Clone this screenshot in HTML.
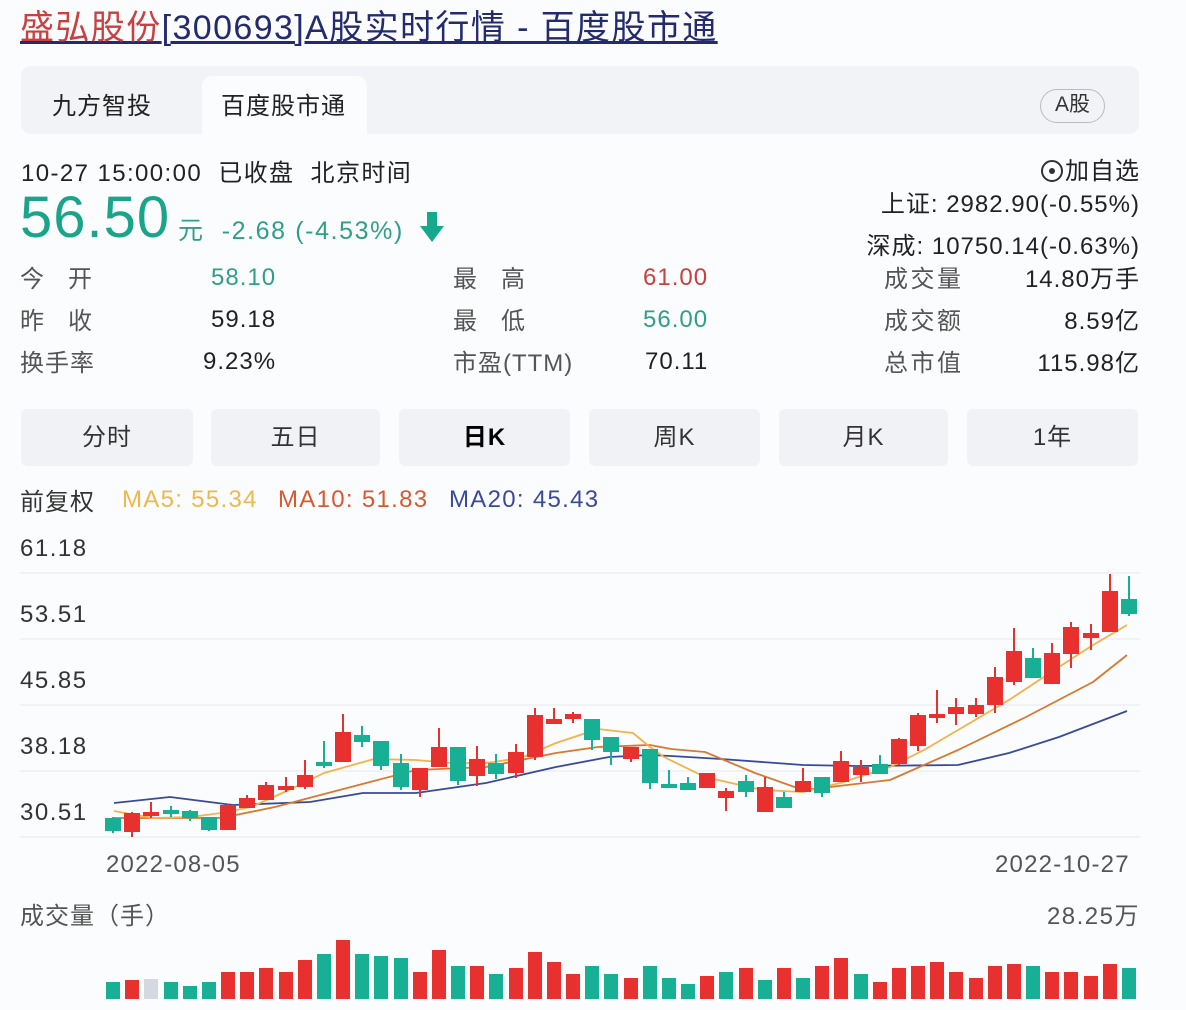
<!DOCTYPE html>
<html><head><meta charset="utf-8"><style>
*{margin:0;padding:0;box-sizing:border-box}
body{width:1186px;height:1010px;background:#fbfcfe;font-family:"Liberation Sans","Noto Sans CJK SC",sans-serif;color:#222;position:relative;overflow:hidden;letter-spacing:1px}
.a{position:absolute;white-space:nowrap}
.btn{position:absolute;top:409px;height:57px;background:#f1f2f5;border-radius:6px;font-size:24px;color:#333;text-align:center;line-height:57px}
.lbl{color:#555;font-size:24px;margin-top:-5px}
.v{font-size:24px;color:#222}
.vc{margin-top:-5px}
</style></head><body>
<div class="a" style="left:20px;top:6px;font-size:34px;line-height:44px;text-decoration:underline;color:#232a6e;letter-spacing:1.4px"><span style="color:#c8403f">盛弘股份</span>[300693]A股实时行情 - 百度股市通</div>

<div class="a" style="left:21px;top:66px;width:1118px;height:68px;background:#f2f3f6;border-radius:10px"></div>
<div class="a" style="left:202px;top:76px;width:165px;height:58px;background:#fbfcfe;border-radius:10px 10px 0 0"></div>
<div class="a" style="left:52px;top:86px;font-size:24px;color:#222">九方智投</div>
<div class="a" style="left:221px;top:86px;font-size:24px;color:#222">百度股市通</div>
<div class="a" style="left:1040px;top:89px;width:65px;height:34px;border:1px solid #bbb;border-radius:17px;font-size:21px;line-height:30px;text-align:center;color:#333;letter-spacing:0">A股</div>

<div class="a" style="left:21px;top:153px;font-size:24px;color:#222;letter-spacing:1.4px">10-27 15:00:00&nbsp; 已收盘&nbsp; 北京时间</div>
<div class="a" style="left:20px;top:185px;font-size:58px;line-height:66px;color:#1aa58b;letter-spacing:1px">56.50</div>
<div class="a" style="left:178px;top:211px;font-size:25px;color:#2f9e8a;letter-spacing:1.6px">元 &nbsp;-2.68 (-4.53%)</div>
<svg class="a" style="left:418px;top:210px" width="28" height="34"><path d="M9 2h10v14h7L14 32 2 16h7z" fill="#17a98b"/></svg>

<div class="a" style="right:46px;top:151px;font-size:24px;color:#222"><span style="display:inline-block;width:22px;height:22px;border:2px solid #333;border-radius:50%;vertical-align:-3px;position:relative;margin-right:2px"><span style="position:absolute;left:6px;top:6px;width:6px;height:6px;background:#333;border-radius:50%"></span></span>加自选</div>
<div class="a" style="right:46px;top:184px;font-size:24px;color:#222">上证: 2982.90(-0.55%)</div>
<div class="a" style="right:46px;top:226px;font-size:24px;color:#222">深成: 10750.14(-0.63%)</div>

<div class="a lbl" style="left:20px;top:264px">今&nbsp;&nbsp;&nbsp;开</div>
<div class="a v" style="left:211px;top:264px;color:#2f9e8a">58.10</div>
<div class="a lbl" style="left:20px;top:306px">昨&nbsp;&nbsp;&nbsp;收</div>
<div class="a v" style="left:211px;top:306px">59.18</div>
<div class="a lbl" style="left:20px;top:348px">换手率</div>
<div class="a v" style="left:203px;top:348px">9.23%</div>

<div class="a lbl" style="left:453px;top:264px">最&nbsp;&nbsp;&nbsp;高</div>
<div class="a v" style="left:643px;top:264px;color:#c8403f">61.00</div>
<div class="a lbl" style="left:453px;top:306px">最&nbsp;&nbsp;&nbsp;低</div>
<div class="a v" style="left:643px;top:306px;color:#2f9e8a">56.00</div>
<div class="a lbl" style="left:453px;top:348px">市盈(TTM)</div>
<div class="a v" style="left:645px;top:348px">70.11</div>

<div class="a lbl" style="left:884px;top:264px;letter-spacing:2.5px">成交量</div>
<div class="a v vc" style="right:46px;top:264px">14.80万手</div>
<div class="a lbl" style="left:884px;top:306px;letter-spacing:2.5px">成交额</div>
<div class="a v vc" style="right:46px;top:306px">8.59亿</div>
<div class="a lbl" style="left:884px;top:348px;letter-spacing:2.5px">总市值</div>
<div class="a v vc" style="right:46px;top:348px">115.98亿</div>

<div class="btn" style="left:21px;width:172px">分时</div>
<div class="btn" style="left:211px;width:169px">五日</div>
<div class="btn" style="left:399px;width:171px;color:#000;font-weight:bold">日K</div>
<div class="btn" style="left:589px;width:171px">周K</div>
<div class="btn" style="left:779px;width:169px">月K</div>
<div class="btn" style="left:967px;width:171px">1年</div>

<div class="a" style="left:20px;top:482px;font-size:24px;color:#333">前复权</div>
<div class="a" style="left:122px;top:486px;font-size:24px;color:#f0b74a;letter-spacing:1.3px">MA5: 55.34</div>
<div class="a" style="left:278px;top:486px;font-size:24px;color:#d9582f;letter-spacing:1.3px">MA10: 51.83</div>
<div class="a" style="left:449px;top:486px;font-size:24px;color:#3a4a9a;letter-spacing:1.3px">MA20: 45.43</div>

<div class="a" style="left:20px;top:535px;font-size:24px;color:#333;letter-spacing:1.5px">61.18</div>
<div class="a" style="left:20px;top:601px;font-size:24px;color:#333;letter-spacing:1.5px">53.51</div>
<div class="a" style="left:20px;top:667px;font-size:24px;color:#333;letter-spacing:1.5px">45.85</div>
<div class="a" style="left:20px;top:733px;font-size:24px;color:#333;letter-spacing:1.5px">38.18</div>
<div class="a" style="left:20px;top:799px;font-size:24px;color:#333;letter-spacing:1.5px">30.51</div>
<div class="a" style="left:106px;top:851px;font-size:24px;color:#555;letter-spacing:1.2px">2022-08-05</div>
<div class="a" style="left:995px;top:851px;font-size:24px;color:#555;letter-spacing:1.2px">2022-10-27</div>
<div class="a" style="left:20px;top:896px;font-size:24px;color:#555">成交量（手）</div>
<div class="a" style="right:46px;top:896px;font-size:24px;color:#555;letter-spacing:1.5px">28.25万</div>

<svg class="a" style="left:0;top:0" width="1186" height="1010">
<g stroke="#eceef3" stroke-width="1.5">
<line x1="20" y1="573" x2="1140" y2="573"/><line x1="20" y1="639" x2="1140" y2="639"/><line x1="20" y1="705" x2="1140" y2="705"/><line x1="20" y1="771" x2="1140" y2="771"/><line x1="20" y1="837" x2="1140" y2="837"/>
</g>
<g fill="none" stroke-width="1.8" stroke-linejoin="round">
<polyline stroke="#3a4a9a" points="114,803 170,797 233,805 310,802 363,793 416,793 486,783 556,767 609,757 650,755 671,756 721,759 803,765 857,766 958,765 1009,753 1059,737 1127,711"/>
<polyline stroke="#d9782f" points="114,818 221,818 275,807 328,793 370,782 416,770 486,767 556,753 598,747 650,745 671,749 705,752 755,773 803,790 830,787 890,780 958,750 1026,717 1093,682 1127,655"/>
<polyline stroke="#f3b24a" points="114,811 153,818 191,817 221,813 251,807 289,790 324,773 374,759 416,760 451,763 486,763 521,758 556,743 598,729 633,733 650,747 664,757 705,777 762,790 803,792 840,783 890,767 924,750 975,720 1009,700 1059,667 1093,645 1127,625"/>
</g>
<g stroke-width="2">
<g stroke="#17b095" fill="#17b095">
<line x1="113" y1="817" x2="113" y2="833"/><rect x="106" y="819" width="14" height="11"/>
<line x1="171" y1="806" x2="171" y2="817"/><rect x="164" y="811" width="14" height="2"/>
<line x1="190" y1="810" x2="190" y2="821"/><rect x="183" y="812" width="14" height="5"/>
<line x1="209" y1="818" x2="209" y2="831"/><rect x="202" y="818" width="14" height="11"/>
<line x1="324" y1="741" x2="324" y2="768"/><rect x="317" y="763" width="14" height="2"/>
<line x1="362" y1="726" x2="362" y2="747"/><rect x="355" y="736" width="14" height="5"/>
<line x1="381" y1="742" x2="381" y2="770"/><rect x="374" y="742" width="14" height="23"/>
<line x1="401" y1="754" x2="401" y2="790"/><rect x="394" y="764" width="14" height="22"/>
<line x1="458" y1="748" x2="458" y2="785"/><rect x="451" y="748" width="14" height="32"/>
<line x1="496" y1="754" x2="496" y2="779"/><rect x="489" y="764" width="14" height="9"/>
<line x1="592" y1="720" x2="592" y2="750"/><rect x="585" y="720" width="14" height="19"/>
<line x1="611" y1="738" x2="611" y2="765"/><rect x="604" y="738" width="14" height="13"/>
<line x1="650" y1="750" x2="650" y2="789"/><rect x="643" y="750" width="14" height="32"/>
<line x1="669" y1="770" x2="669" y2="787"/><rect x="662" y="785" width="14" height="2"/>
<line x1="688" y1="777" x2="688" y2="789"/><rect x="681" y="784" width="14" height="5"/>
<line x1="746" y1="775" x2="746" y2="797"/><rect x="739" y="782" width="14" height="9"/>
<line x1="784" y1="792" x2="784" y2="807"/><rect x="777" y="798" width="14" height="9"/>
<line x1="822" y1="778" x2="822" y2="797"/><rect x="815" y="778" width="14" height="14"/>
<line x1="880" y1="755" x2="880" y2="773"/><rect x="873" y="765" width="14" height="8"/>
<line x1="1033" y1="648" x2="1033" y2="678"/><rect x="1026" y="659" width="14" height="18"/>
<line x1="1129" y1="576" x2="1129" y2="616"/><rect x="1122" y="600" width="14" height="13"/>
</g>
<g stroke="#e8312f" fill="#e8312f">
<line x1="132" y1="812" x2="132" y2="837"/><rect x="125" y="814" width="14" height="17"/>
<line x1="151" y1="802" x2="151" y2="818"/><rect x="144" y="813" width="14" height="2"/>
<line x1="228" y1="804" x2="228" y2="830"/><rect x="221" y="806" width="14" height="23"/>
<line x1="247" y1="795" x2="247" y2="808"/><rect x="240" y="799" width="14" height="8"/>
<line x1="266" y1="782" x2="266" y2="800"/><rect x="259" y="786" width="14" height="13"/>
<line x1="286" y1="777" x2="286" y2="792"/><rect x="279" y="787" width="14" height="2"/>
<line x1="305" y1="760" x2="305" y2="789"/><rect x="298" y="776" width="14" height="10"/>
<line x1="343" y1="714" x2="343" y2="761"/><rect x="336" y="733" width="14" height="28"/>
<line x1="420" y1="769" x2="420" y2="797"/><rect x="413" y="769" width="14" height="20"/>
<line x1="439" y1="728" x2="439" y2="766"/><rect x="432" y="748" width="14" height="18"/>
<line x1="477" y1="746" x2="477" y2="786"/><rect x="470" y="760" width="14" height="15"/>
<line x1="516" y1="744" x2="516" y2="778"/><rect x="509" y="753" width="14" height="19"/>
<line x1="535" y1="708" x2="535" y2="760"/><rect x="528" y="716" width="14" height="40"/>
<line x1="554" y1="708" x2="554" y2="723"/><rect x="547" y="720" width="14" height="3"/>
<line x1="573" y1="712" x2="573" y2="723"/><rect x="566" y="715" width="14" height="3"/>
<line x1="631" y1="748" x2="631" y2="762"/><rect x="624" y="748" width="14" height="10"/>
<line x1="707" y1="773" x2="707" y2="787"/><rect x="700" y="774" width="14" height="13"/>
<line x1="726" y1="788" x2="726" y2="811"/><rect x="719" y="792" width="14" height="5"/>
<line x1="765" y1="777" x2="765" y2="811"/><rect x="758" y="788" width="14" height="23"/>
<line x1="803" y1="768" x2="803" y2="791"/><rect x="796" y="782" width="14" height="9"/>
<line x1="841" y1="751" x2="841" y2="781"/><rect x="834" y="762" width="14" height="19"/>
<line x1="861" y1="760" x2="861" y2="782"/><rect x="854" y="768" width="14" height="6"/>
<line x1="899" y1="738" x2="899" y2="765"/><rect x="892" y="740" width="14" height="23"/>
<line x1="918" y1="713" x2="918" y2="751"/><rect x="911" y="716" width="14" height="29"/>
<line x1="937" y1="690" x2="937" y2="723"/><rect x="930" y="715" width="14" height="2"/>
<line x1="956" y1="698" x2="956" y2="725"/><rect x="949" y="708" width="14" height="5"/>
<line x1="976" y1="698" x2="976" y2="717"/><rect x="969" y="706" width="14" height="7"/>
<line x1="995" y1="667" x2="995" y2="713"/><rect x="988" y="678" width="14" height="26"/>
<line x1="1014" y1="628" x2="1014" y2="685"/><rect x="1007" y="652" width="14" height="29"/>
<line x1="1052" y1="643" x2="1052" y2="683"/><rect x="1045" y="654" width="14" height="29"/>
<line x1="1071" y1="622" x2="1071" y2="668"/><rect x="1064" y="628" width="14" height="25"/>
<line x1="1091" y1="624" x2="1091" y2="650"/><rect x="1084" y="634" width="14" height="3"/>
<line x1="1110" y1="574" x2="1110" y2="631"/><rect x="1103" y="592" width="14" height="39"/>
</g>
</g>
<g>
<rect x="106" y="982" width="14" height="17" fill="#17b095"/>
<rect x="125" y="980" width="14" height="19" fill="#e8312f"/>
<rect x="144" y="979" width="14" height="20" fill="#d4d8e0"/>
<rect x="164" y="982" width="14" height="17" fill="#17b095"/>
<rect x="183" y="986" width="14" height="13" fill="#17b095"/>
<rect x="202" y="982" width="14" height="17" fill="#17b095"/>
<rect x="221" y="972" width="14" height="27" fill="#e8312f"/>
<rect x="240" y="972" width="14" height="27" fill="#e8312f"/>
<rect x="259" y="968" width="14" height="31" fill="#e8312f"/>
<rect x="279" y="972" width="14" height="27" fill="#e8312f"/>
<rect x="298" y="960" width="14" height="39" fill="#e8312f"/>
<rect x="317" y="954" width="14" height="45" fill="#17b095"/>
<rect x="336" y="940" width="14" height="59" fill="#e8312f"/>
<rect x="355" y="954" width="14" height="45" fill="#17b095"/>
<rect x="374" y="956" width="14" height="43" fill="#17b095"/>
<rect x="394" y="958" width="14" height="41" fill="#17b095"/>
<rect x="413" y="972" width="14" height="27" fill="#e8312f"/>
<rect x="432" y="950" width="14" height="49" fill="#e8312f"/>
<rect x="451" y="966" width="14" height="33" fill="#17b095"/>
<rect x="470" y="966" width="14" height="33" fill="#e8312f"/>
<rect x="489" y="974" width="14" height="25" fill="#17b095"/>
<rect x="509" y="968" width="14" height="31" fill="#e8312f"/>
<rect x="528" y="952" width="14" height="47" fill="#e8312f"/>
<rect x="547" y="962" width="14" height="37" fill="#e8312f"/>
<rect x="566" y="974" width="14" height="25" fill="#e8312f"/>
<rect x="585" y="966" width="14" height="33" fill="#17b095"/>
<rect x="604" y="974" width="14" height="25" fill="#17b095"/>
<rect x="624" y="978" width="14" height="21" fill="#e8312f"/>
<rect x="643" y="966" width="14" height="33" fill="#17b095"/>
<rect x="662" y="978" width="14" height="21" fill="#17b095"/>
<rect x="681" y="984" width="14" height="15" fill="#17b095"/>
<rect x="700" y="976" width="14" height="23" fill="#e8312f"/>
<rect x="719" y="972" width="14" height="27" fill="#17b095"/>
<rect x="739" y="968" width="14" height="31" fill="#e8312f"/>
<rect x="758" y="980" width="14" height="19" fill="#17b095"/>
<rect x="777" y="968" width="14" height="31" fill="#e8312f"/>
<rect x="796" y="978" width="14" height="21" fill="#17b095"/>
<rect x="815" y="966" width="14" height="33" fill="#e8312f"/>
<rect x="834" y="958" width="14" height="41" fill="#e8312f"/>
<rect x="854" y="974" width="14" height="25" fill="#17b095"/>
<rect x="873" y="982" width="14" height="17" fill="#e8312f"/>
<rect x="892" y="968" width="14" height="31" fill="#e8312f"/>
<rect x="911" y="966" width="14" height="33" fill="#e8312f"/>
<rect x="930" y="962" width="14" height="37" fill="#e8312f"/>
<rect x="949" y="972" width="14" height="27" fill="#e8312f"/>
<rect x="969" y="978" width="14" height="21" fill="#e8312f"/>
<rect x="988" y="966" width="14" height="33" fill="#e8312f"/>
<rect x="1007" y="964" width="14" height="35" fill="#e8312f"/>
<rect x="1026" y="966" width="14" height="33" fill="#17b095"/>
<rect x="1045" y="972" width="14" height="27" fill="#e8312f"/>
<rect x="1064" y="972" width="14" height="27" fill="#e8312f"/>
<rect x="1084" y="976" width="14" height="23" fill="#e8312f"/>
<rect x="1103" y="964" width="14" height="35" fill="#e8312f"/>
<rect x="1122" y="968" width="14" height="31" fill="#17b095"/>
</g>
</svg>
</body></html>
